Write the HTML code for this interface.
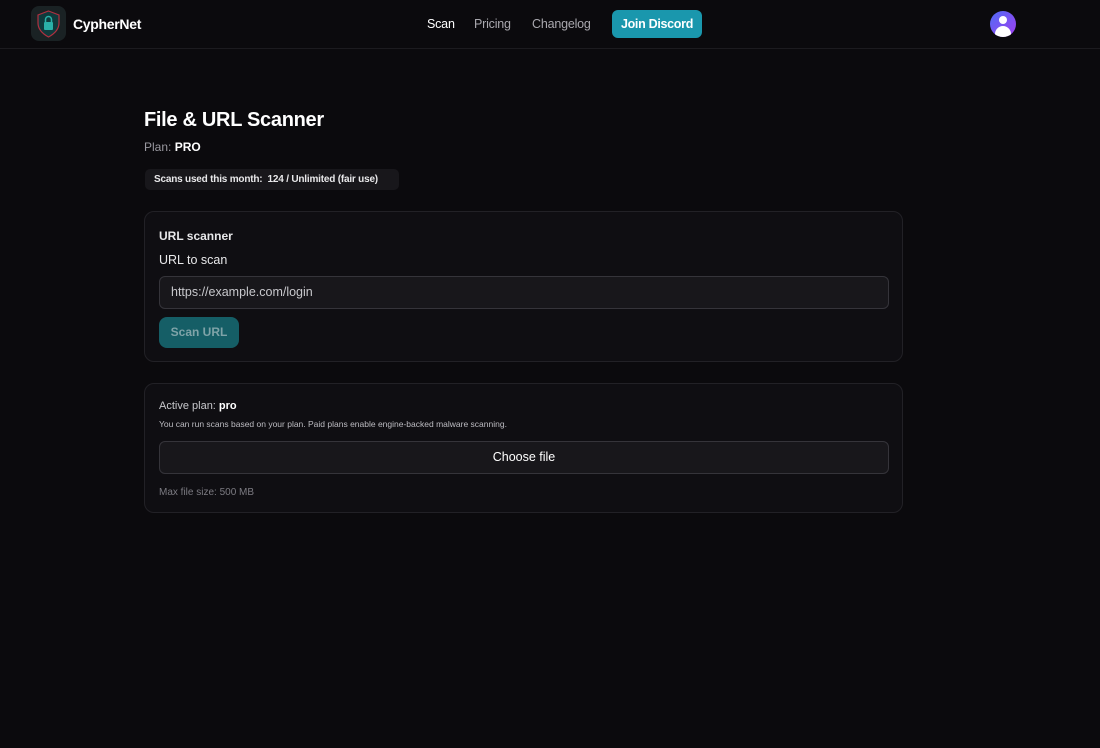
<!DOCTYPE html>
<html><head><style>
*{box-sizing:border-box;margin:0;padding:0}
body{width:1100px;height:748px;background:#0b0a0d;font-family:"Liberation Sans",sans-serif;color:#e8e8ea;position:relative;overflow:hidden}
.hdr{position:absolute;left:0;top:0;width:1100px;height:49px;border-bottom:1px solid #1c1b1f}
.logo{position:absolute;left:31px;top:6px;width:35px;height:35px;border-radius:8px;background:#1a2224}
.brand{position:absolute;left:73px;top:16px;font-size:14px;font-weight:bold;color:#fff;letter-spacing:-0.3px}
.nav{position:absolute;top:17px;font-size:12.5px;letter-spacing:-0.2px}
.disc{position:absolute;left:612px;top:10px;width:90px;height:28px;border-radius:6px;background:#1a97ad;color:#fff;font-weight:bold;font-size:12.5px;text-align:center;line-height:28px;letter-spacing:-0.3px}
.av{position:absolute;left:990px;top:11px;width:26px;height:26px;border-radius:50%;background:linear-gradient(135deg,#4f6cf5,#a13ef0);overflow:hidden}
h1{position:absolute;left:144px;top:109px;font-size:20px;color:#fff;letter-spacing:-0.3px}
.plan{position:absolute;left:144px;top:140px;font-size:12px;color:#9a99a0}
.plan b{color:#fff}
.pill{position:absolute;left:145px;top:169px;width:254px;height:21px;border-radius:5px;background:#18171b;font-size:10px;font-weight:bold;color:#e8e8ea;line-height:21px;padding-left:9px;white-space:nowrap;letter-spacing:-0.2px}
.card{position:absolute;left:144px;width:759px;border:1px solid #222126;border-radius:10px;background:#0f0e12}
.inp{position:absolute;left:14px;width:730px;height:33px;border:1px solid #35343a;border-radius:6px;background:#18171b;font-size:12.5px;color:#c8c8cc;line-height:31px;padding-left:11px}
</style></head><body>
<div class="hdr">
<div class="logo"><svg width="35" height="35" viewBox="0 0 35 35"><path d="M17.5 5 L28 9 V17 C28 24 23 28 17.5 31 C12 28 7 24 7 17 V9 Z" fill="#0f3a3c" stroke="#b03040" stroke-width="1.2"/><rect x="13" y="16" width="9" height="8" rx="1" fill="#2ab0a8"/><path d="M14.5 16 V13.5 a3 3 0 0 1 6 0 V16" fill="none" stroke="#2ab0a8" stroke-width="1.5"/></svg></div>
<div class="brand">CypherNet</div>
<div class="nav" style="left:427px;color:#fff">Scan</div>
<div class="nav" style="left:474px;color:#a9a8ae">Pricing</div>
<div class="nav" style="left:532px;color:#a9a8ae">Changelog</div>
<div class="disc">Join Discord</div>
<div class="av"><div style="position:absolute;left:9px;top:5px;width:8px;height:8px;border-radius:50%;background:#fff"></div><div style="position:absolute;left:5px;top:15px;width:16px;height:12px;border-radius:8px 8px 0 0;background:#fff"></div></div>
</div>
<h1>File &amp; URL Scanner</h1>
<div class="plan">Plan: <b>PRO</b></div>
<div class="pill">Scans used this month:&nbsp; 124 / Unlimited (fair use)</div>
<div class="card" style="top:211px;height:151px">
<div style="position:absolute;left:14px;top:17px;font-size:12px;font-weight:bold">URL scanner</div>
<div style="position:absolute;left:14px;top:41px;font-size:12.5px">URL to scan</div>
<div class="inp" style="top:64px">https://example.com/login</div>
<div style="position:absolute;left:14px;top:105px;width:80px;height:31px;border-radius:8px;background:#155e66;color:#7fa3a8;font-weight:bold;font-size:12px;text-align:center;line-height:31px">Scan URL</div>
</div>
<div class="card" style="top:383px;height:130px">
<div style="position:absolute;left:14px;top:16px;font-size:11px;color:#c8c8cc">Active plan: <b style="color:#fff">pro</b></div>
<div style="position:absolute;left:14px;top:35px;font-size:8.5px;color:#bdbcc2">You can run scans based on your plan. Paid plans enable engine-backed malware scanning.</div>
<div class="inp" style="top:57px;text-align:center;padding:0;color:#fff">Choose file</div>
<div style="position:absolute;left:14px;top:103px;font-size:10px;color:#7c7b82">Max file size: 500 MB</div>
</div>
</body></html>
